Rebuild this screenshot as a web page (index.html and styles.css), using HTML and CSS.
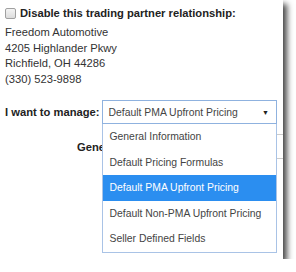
FILE: index.html
```html
<!DOCTYPE html>
<html>
<head>
<meta charset="utf-8">
<link rel="stylesheet" href="styles.css">
</head>
<body>
<div class="panel">
  <div class="disable"><span class="check"></span><span class="disable-text">Disable this trading partner relationship:</span></div>
  <div class="address">
    <div>Freedom Automotive</div>
    <div>4205 Highlander Pkwy</div>
    <div>Richfield, OH 44286</div>
    <div>(330) 523-9898</div>
  </div>
  <div class="manage">
    <span class="manage-label">I want to manage:</span>
    <div class="select">
      <span class="select-value">Default PMA Upfront Pricing</span>
      <span class="arrow">&#9660;</span>
      <ul class="menu">
        <li class="item">General Information</li>
        <li class="item">Default Pricing Formulas</li>
        <li class="item selected">Default PMA Upfront Pricing</li>
        <li class="item">Default Non-PMA Upfront Pricing</li>
        <li class="item">Seller Defined Fields</li>
      </ul>
    </div>
  </div>
  <div class="tabs">
    <span class="tab-label">General</span>
    <div class="tab-box"></div>
  </div>
</div>
</body>
</html>
```
FILE: styles.css
```css
html, body {
  margin: 0;
  padding: 0;
  background: #fff;
}
body {
  font-family: "Liberation Sans", Arial, sans-serif;
  font-size: 11.2px;
  color: #333;
}
.panel {
  width: 283px;
  height: 259px;
  box-sizing: border-box;
  padding: 5px 0 0 5px;
  background: #fff;
  box-shadow: 4px 4px 6px rgba(0, 0, 0, 0.72);
  overflow: hidden;
  position: relative;
}
.disable {
  display: flex;
  align-items: center;
  height: 16px;
  line-height: 16px;
}
.check {
  width: 9px;
  height: 9px;
  border: 1px solid #a0a0a0;
  border-radius: 2px;
  background: linear-gradient(#f4f4f4, #dcdcdc);
  margin-right: 4px;
}
.disable-text {
  font-weight: bold;
  color: #222;
}
.address {
  margin-top: 4px;
  line-height: 15.5px;
  color: #333;
}
.manage {
  display: flex;
  align-items: center;
  margin-top: 13px;
  gap: 3px;
}
.manage-label {
  font-weight: bold;
  color: #222;
  white-space: nowrap;
}
.select {
  position: relative;
  width: 175px;
  height: 24px;
  box-sizing: border-box;
  border: 1px solid #8fb2df;
  display: flex;
  align-items: center;
  padding-left: 5px;
  font-size: 10.4px;
  color: #444;
  margin-left: auto;
  margin-right: 6px;
  z-index: 2;
  background: #fff;
}
.select-value {
  flex: 1;
}
.arrow {
  font-size: 7px;
  color: #222;
  margin-right: 7px;
}
.menu {
  position: absolute;
  top: 23px;
  left: -1px;
  width: 175px;
  box-sizing: border-box;
  margin: 0;
  padding: 0;
  list-style: none;
  border: 1px solid #a9c3e6;
  border-top: 0;
  background: #fff;
}
.item {
  height: 25.6px;
  line-height: 25.6px;
  padding-left: 6px;
  color: #444;
  white-space: nowrap;
}
.item.selected {
  background: #2b8ef0;
  color: #fff;
}
.tabs {
  display: flex;
  align-items: center;
  margin-top: 10px;
  padding-left: 72px;
  position: relative;
  z-index: 1;
}
.tab-label {
  font-weight: bold;
  color: #222;
  white-space: nowrap;
}
.tab-box {
  flex: 1;
  height: 23px;
  border-top: 1px solid #ccc;
  border-bottom: 1px solid #ccc;
}
```
